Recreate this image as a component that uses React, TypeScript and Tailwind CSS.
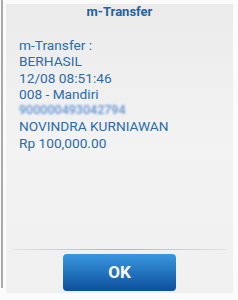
export default function App() {
  return (
    <div className="w-[238px] h-[300px] bg-[#fbfbfb] relative overflow-hidden font-['Roboto','Liberation_Sans',sans-serif]">
      <div className="absolute left-[1px] top-0 w-[2px] h-[288px] bg-[#a9a9a9]" />
      <div className="absolute left-[6px] top-[4px] w-[227px] h-[289px] flex flex-col bg-gradient-to-b from-[#ebebeb] via-[#f3f3f3] to-[#f0f0f0]">
        <div className="h-[14px] flex items-center justify-center text-[13px] font-bold text-[#2262a3] leading-none">m-Transfer</div>
        <div className="pl-[13px] pt-[19px] text-[13.7px] leading-[16.3px] text-[#2a6cae] flex flex-col">
          <span>m-Transfer :</span>
          <span>BERHASIL</span>
          <span>12/08 08:51:46</span>
          <span>008 - Mandiri</span>
          <span className="blur-[1px] text-[#5f93d4] text-[12.5px] font-medium">900000493042794</span>
          <span>NOVINDRA KURNIAWAN</span>
          <span>Rp 100,000.00</span>
        </div>
        <div className="flex-1" />
        <div className="h-[1px] mx-[6px] bg-gradient-to-r from-[#e4e4e4] via-[#b8b0c0] to-[#e4e4e4]" />
        <div className="flex justify-center pt-[4px] pb-[2px]">
          <div className="w-[113px] h-[37px] rounded-[4px] bg-gradient-to-b from-[#3a98e0] to-[#0d4f9c] flex items-center justify-center text-white font-bold text-[17px]">OK</div>
        </div>
      </div>
    </div>
  );
}
